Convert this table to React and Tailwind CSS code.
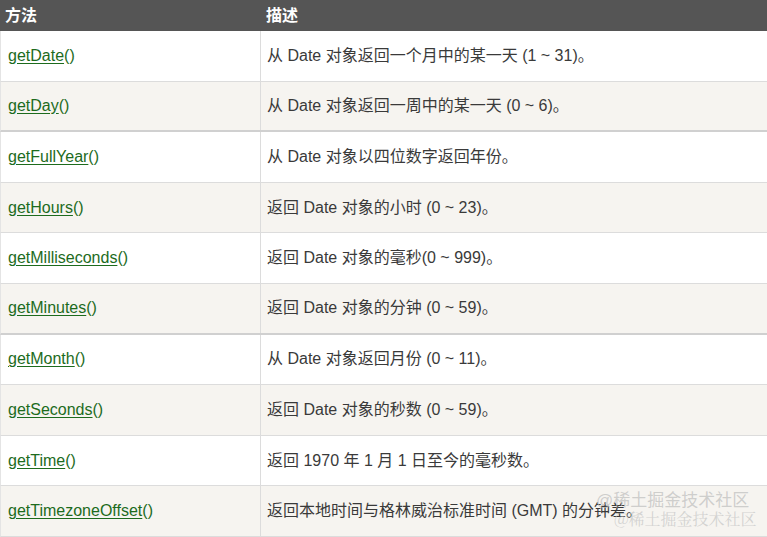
const rows = [
  ["getDate", "从 Date 对象返回一个月中的某一天 (1 ~ 31)。"],
  ["getDay", "从 Date 对象返回一周中的某一天 (0 ~ 6)。"],
  ["getFullYear", "从 Date 对象以四位数字返回年份。"],
  ["getHours", "返回 Date 对象的小时 (0 ~ 23)。"],
  ["getMilliseconds", "返回 Date 对象的毫秒(0 ~ 999)。"],
  ["getMinutes", "返回 Date 对象的分钟 (0 ~ 59)。"],
  ["getMonth", "从 Date 对象返回月份 (0 ~ 11)。"],
  ["getSeconds", "返回 Date 对象的秒数 (0 ~ 59)。"],
  ["getTime", "返回 1970 年 1 月 1 日至今的毫秒数。"],
  ["getTimezoneOffset", "返回本地时间与格林威治标准时间 (GMT) 的分钟差。"],
];

// rows followed by a slightly heavier rule in the screenshot
const heavy = [1, 5];

export default function App() {
  return (
    <div
      className="relative h-[537px] w-[767px] overflow-hidden bg-white text-[16px] text-[#3a3a3a]"
      style={{ fontFamily: '"Liberation Sans", Arial, "Noto Sans CJK SC", sans-serif' }}
    >
      <div className="flex h-[31px] items-center bg-[#555555] font-bold text-white">
        <div className="w-[261px] pl-[5px]">方法</div>
        <div className="pl-[5px]">描述</div>
      </div>

      {rows.map(([name, desc], i) => (
        <div
          key={name}
          className={
            "flex h-[50.6px] border-l border-[#e4e4e4] " +
            (i % 2 === 0 ? "bg-white " : "bg-[#f6f4f0] ") +
            (heavy.includes(i) ? "border-b-2 border-b-[#d0d0d0]" : "border-b border-b-[#dcdcdc]")
          }
        >
          <div className="flex w-[260px] items-center border-r border-[#dcdcdc] pl-[7px]">
            <span className="text-[#1d6b1d]">
              <span className="underline underline-offset-2">{name}</span>()
            </span>
          </div>
          <div className="flex items-center pl-[6px]">{desc}</div>
        </div>
      ))}

      <div className="pointer-events-none absolute left-[596px] top-[488px] text-[17px] whitespace-nowrap text-[#bdbdbd]/70">
        @稀土掘金技术社区
      </div>
      <div
        className="pointer-events-none absolute left-[614px] top-[507px] text-[16px] whitespace-nowrap text-[#c4c4c4]/70"
        style={{ fontFamily: '"Noto Serif CJK SC", "Liberation Serif", "Noto Sans CJK SC", serif' }}
      >
        @稀土掘金技术社区
      </div>
    </div>
  );
}
